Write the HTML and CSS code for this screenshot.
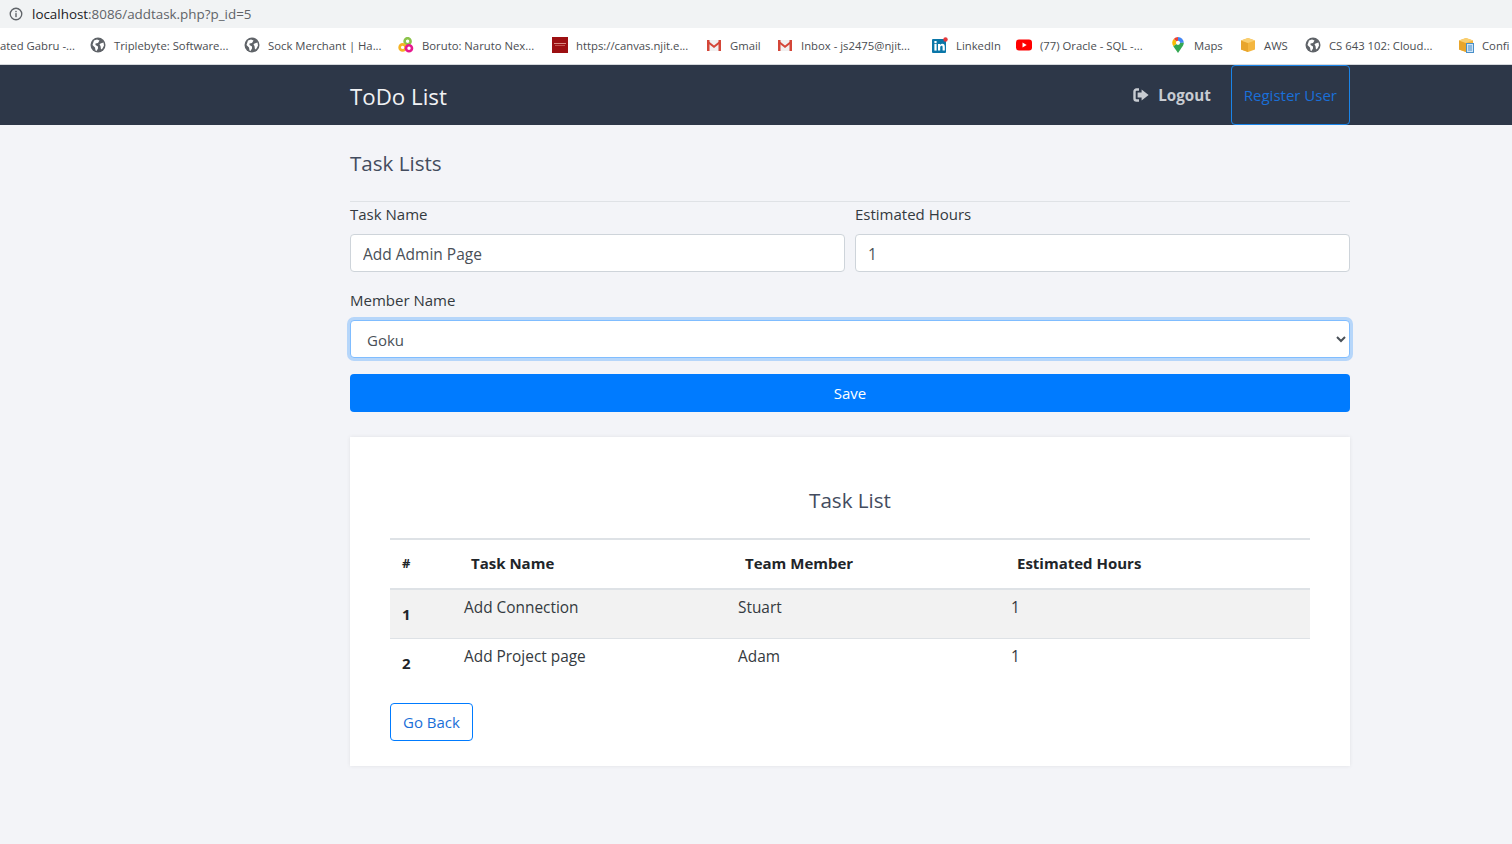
FILE: index.html

```html
<!DOCTYPE html>
<html lang="en">
<head>
    <meta charset="UTF-8">
    <title>ToDo List</title>
    <link rel="stylesheet" href="styles.css">
</head>
<body>
    <div class="address-bar">
        <svg class="info-icon" viewBox="0 0 16 16" width="14" height="14">
            <circle cx="8" cy="8" r="6.6" fill="none" stroke="#5f6368" stroke-width="1.5"/>
            <rect x="7.2" y="7" width="1.6" height="4.6" fill="#5f6368"/>
            <rect x="7.2" y="4.4" width="1.6" height="1.6" fill="#5f6368"/>
        </svg>
        <span class="url"><span class="url-host">localhost</span>:8086/addtask.php?p_id=5</span>
    </div>

    <div class="bookmarks">
        <div class="bookmark bookmark-cut"><span>ated Gabru -...</span></div>
        <div class="bookmark">
            <svg class="fav" viewBox="0 0 16 16"><use href="#globe"/></svg>
            <span>Triplebyte: Software...</span>
        </div>
        <div class="bookmark">
            <svg class="fav" viewBox="0 0 16 16"><use href="#globe"/></svg>
            <span>Sock Merchant | Ha...</span>
        </div>
        <div class="bookmark">
            <svg class="fav" viewBox="0 0 16 16">
                <circle cx="9.6" cy="4.2" r="3" fill="none" stroke="#8bc34a" stroke-width="2.6"/>
                <circle cx="4.6" cy="10.4" r="3" fill="none" stroke="#f5b324" stroke-width="2.6"/>
                <circle cx="11" cy="11.2" r="3" fill="none" stroke="#e6188f" stroke-width="2.6"/>
            </svg>
            <span>Boruto: Naruto Nex...</span>
        </div>
        <div class="bookmark">
            <svg class="fav" viewBox="0 0 16 16">
                <rect width="16" height="16" fill="#9c0f12"/>
                <rect x="2" y="6" width="12" height="1" fill="#d98a82"/>
                <rect x="3" y="8" width="10" height="1" fill="#c2534e"/>
            </svg>
            <span>https://canvas.njit.e...</span>
        </div>
        <div class="bookmark">
            <svg class="fav" viewBox="0 0 16 16"><use href="#gmail"/></svg>
            <span>Gmail</span>
        </div>
        <div class="bookmark">
            <svg class="fav" viewBox="0 0 16 16"><use href="#gmail"/></svg>
            <span>Inbox - js2475@njit...</span>
        </div>
        <div class="bookmark">
            <svg class="fav" viewBox="0 0 16 16">
                <rect y="2" width="14" height="14" rx="1" fill="#0a76a8"/>
                <rect x="2.4" y="7" width="2.2" height="6.6" fill="#fff"/>
                <rect x="2.4" y="4" width="2.2" height="2.2" fill="#fff"/>
                <path d="M6 7h2.1v1c.5-.8 1.3-1.2 2.2-1.2 1.8 0 2.5 1.1 2.5 2.9v3.9h-2.2v-3.5c0-.9-.3-1.4-1-1.4-.8 0-1.4.6-1.4 1.5v3.4H6z" fill="#fff"/>
                <circle cx="13.5" cy="2.5" r="2.2" fill="#e5383b"/>
            </svg>
            <span>LinkedIn</span>
        </div>
        <div class="bookmark">
            <svg class="fav" viewBox="0 0 16 16">
                <rect y="2.5" width="16" height="11" rx="3" fill="#f00"/>
                <path d="M6.5 5.5v5l4.2-2.5z" fill="#fff"/>
            </svg>
            <span>(77) Oracle - SQL -...</span>
        </div>
        <div class="bookmark">
            <svg class="fav" viewBox="0 0 16 16">
                <path d="M8 0a5.8 5.8 0 0 1 5.8 5.8L8 6z" fill="#4285f4"/>
                <path d="M8 0a5.8 5.8 0 0 0-4.3 1.9L8 6z" fill="#ea4335"/>
                <path d="M3.7 1.900a5.800 5.800 0 0 0-1.500 3.900c0 1.300.5 2.400 1.100 3.400L8 6z" fill="#fbbc04"/>
                <path d="M13.800 5.800c0 1.300-.6 2.400-1.200 3.400L8 16 3.300 9.200 8 6z" fill="#34a853"/>
                <circle cx="8" cy="5.800" r="2.100" fill="#fff"/>
            </svg>
            <span>Maps</span>
        </div>
        <div class="bookmark">
            <svg class="fav" viewBox="0 0 16 16"><use href="#box"/></svg>
            <span>AWS</span>
        </div>
        <div class="bookmark">
            <svg class="fav" viewBox="0 0 16 16"><use href="#globe"/></svg>
            <span>CS 643 102: Cloud...</span>
        </div>
        <div class="bookmark">
            <svg class="fav" viewBox="0 0 16 16">
                <use href="#box"/>
                <rect x="8.5" y="6.5" width="7" height="9" fill="#cfe4f7" stroke="#4a90c9"/>
                <path d="M10 9h4M10 11h4M10 13h4" stroke="#4a90c9"/>
            </svg>
            <span>Confi</span>
        </div>
    </div>

    <svg class="defs" width="0" height="0">
        <symbol id="globe" viewBox="0 0 16 16">
            <circle cx="8" cy="8" r="7.5" fill="#5f6368"/>
            <path d="M4 3.500l3-1 2.500 1-1.500 2.500-2.500.5 0 1.500 2.500 1.500 0 2-1.500 2.500-1-.5-.5-3-2.500-2.500zM10.500 6.500l3-1 .5 3-1.500 3-1.500 1-.5-3.500-1-1.500z" fill="#fff"/>
        </symbol>
        <symbol id="gmail" viewBox="0 0 16 16">
            <path d="M1 3h14v11H1z" fill="#f1f1f1"/>
            <path d="M1 3h2.500v11H1zM12.500 3H15v11h-2.500z" fill="#d44638"/>
            <path d="M1 3l7 5.500L15 3v2.600L8 11 1 5.600z" fill="#d44638"/>
        </symbol>
        <symbol id="box" viewBox="0 0 16 16">
            <path d="M8 1l7 2.500v9L8 15l-7-2.500v-9z" fill="#f4b63f"/>
            <path d="M8 6v9l-7-2.500v-9z" fill="#e8a52c"/>
            <path d="M1 3.500L8 1l7 2.500L8 6z" fill="#f9cf71"/>
        </symbol>
    </svg>

    <nav class="navbar">
        <div class="navbar-inner">
            <a class="brand" href="#">ToDo List</a>
            <div class="nav-links">
                <a class="logout" href="#">
                    <svg viewBox="0 0 16 14" width="16" height="14">
                        <path d="M6 1.500H3.500a2 2 0 0 0-2 2v7a2 2 0 0 0 2 2H6" fill="none" stroke="#c8ccd2" stroke-width="2.4"/>
                        <path d="M8.600 1.400L15.600 7l-7 5.600V9.400H4.600V4.600h4z" fill="#c8ccd2"/>
                    </svg>
                    Logout
                </a>
                <a class="register" href="#">Register User</a>
            </div>
        </div>
    </nav>

    <main class="container">
        <h2 class="page-title">Task Lists</h2>
        <hr class="divider">

        <form class="task-form">
            <div class="form-row">
                <div class="field">
                    <label for="task">Task Name</label>
                    <input id="task" class="control" type="text" value="Add Admin Page">
                </div>
                <div class="field">
                    <label for="hours">Estimated Hours</label>
                    <input id="hours" class="control" type="text" value="1">
                </div>
            </div>
            <div class="field">
                <label for="member">Member Name</label>
                <select id="member" class="control control-focus">
                    <option>Goku</option>
                </select>
            </div>
            <button class="save" type="button">Save</button>
        </form>

        <section class="card">
            <h3 class="card-title">Task List</h3>
            <table class="table">
                <thead>
                    <tr>
                        <th class="col-num">#</th>
                        <th class="col-task">Task Name</th>
                        <th class="col-member">Team Member</th>
                        <th class="col-hours">Estimated Hours</th>
                    </tr>
                </thead>
                <tbody>
                    <tr class="striped">
                        <th>1</th>
                        <td>Add Connection</td>
                        <td>Stuart</td>
                        <td>1</td>
                    </tr>
                    <tr>
                        <th>2</th>
                        <td>Add Project page</td>
                        <td>Adam</td>
                        <td>1</td>
                    </tr>
                </tbody>
            </table>
            <a class="back" href="#">Go Back</a>
        </section>
    </main>
</body>
</html>
```

FILE: styles.css

```css
* {
    box-sizing: border-box;
}
body {
    margin: 0;
    height: 844px;
    overflow: hidden;
    font-family: "Open Sans", "Noto Sans", sans-serif;
    font-size: 15px;
    color: #212529;
    background: #f3f4f8;
}
a {
    text-decoration: none;
}
.defs {
    display: none;
}

/* browser bars */
.address-bar {
    height: 28px;
    display: flex;
    align-items: center;
    padding-left: 9px;
    gap: 9px;
    background: #f1f3f4;
    font-size: 13.4px;
    color: #5f6368;
}
.url-host {
    color: #202124;
}
.bookmarks {
    height: 37px;
    padding-bottom: 2px;
    display: grid;
    grid-template-columns: 90px 154px 154px 154px 154px 71px 155px 84px 154px 70px 65px 153px 54px;
    align-items: center;
    background: #fff;
    border-bottom: 1px solid #d5d8dc;
    font-size: 11.3px;
    color: #4a4d51;
    overflow: hidden;
}
.bookmark {
    display: flex;
    align-items: center;
    gap: 8px;
    white-space: nowrap;
    overflow: hidden;
}
.fav {
    width: 16px;
    height: 16px;
    flex: none;
}

/* navbar */
.navbar {
    height: 60px;
    background: #2d3748;
}
.navbar-inner {
    width: 1000px;
    height: 100%;
    margin-left: 350px;
    display: flex;
    justify-content: space-between;
    align-items: center;
}
.brand {
    padding-top: 2px;
    font-size: 22.3px;
    color: #f1f2f4;
}
.nav-links {
    display: flex;
    align-items: stretch;
    height: 100%;
    gap: 20px;
}
.logout {
    display: flex;
    align-items: center;
    gap: 9px;
    font-size: 15.2px;
    font-weight: 700;
    color: #c8ccd2;
}
.register {
    display: flex;
    align-items: center;
    padding: 0 12px;
    border: 1px solid #1a84e8;
    border-radius: 4px;
    color: #1a6fd8;
}

/* form */
.container {
    width: 1000px;
    margin-left: 350px;
}
.page-title {
    margin: 0;
    padding-top: 23px;
    font-size: 20.6px;
    font-weight: 500;
    line-height: 30px;
    color: #434c5e;
}
.divider {
    margin: 23px 0 0;
    border: 0;
    border-top: 1px solid #dfe2e6;
}
.form-row {
    display: flex;
    gap: 10px;
}
.form-row .field {
    flex: 1;
}
.field label {
    display: block;
    height: 32px;
    line-height: 24px;
    color: #343a40;
}
.field {
    margin-bottom: 16px;
}
.control {
    display: block;
    width: 100%;
    height: 38px;
    padding: 7px 12px 5px;
    font: inherit;
    font-size: 15.5px;
    color: #495057;
    background: #fff;
    border: 1px solid #ced4da;
    border-radius: 4px;
    outline: none;
}
.control-focus {
    font-size: 15px;
    border-color: #80bdff;
    box-shadow: 0 0 0 3px rgba(0, 123, 255, 0.25);
}
.save {
    display: block;
    width: 100%;
    height: 38px;
    font: inherit;
    color: #fff;
    background: #007bff;
    border: 0;
    border-radius: 4px;
}

/* card with table */
.card {
    height: 329px;
    margin-top: 25px;
    padding: 40px;
    background: #fff;
    box-shadow: 0 0 4px rgba(0, 0, 0, 0.08);
}
.card-title {
    margin: 7px 0 22px;
    font-size: 20.6px;
    font-weight: 500;
    line-height: 32px;
    text-align: center;
    color: #434c5e;
}
.table {
    width: 100%;
    border-collapse: collapse;
    table-layout: fixed;
    border-top: 2px solid #dee2e6;
}
.table th {
    text-align: left;
    padding: 13px 12px;
    font-weight: 700;
    color: #212529;
}
.table td {
    padding: 7px 12px;
    vertical-align: top;
    font-size: 15.4px;
    color: #343a40;
}
.table thead th {
    height: 50px;
    border-bottom: 2px solid #dee2e6;
    padding: 12px 12px 14px 19px;
}
.table thead .col-num {
    width: 62px;
    padding-left: 12px;
    font-size: 13px;
}
.table thead .col-hours {
    padding-left: 18px;
}
.col-task {
    width: 274px;
}
.col-member {
    width: 273px;
}
.table tbody tr {
    height: 49px;
}
.striped {
    background: #f2f2f2;
    border-bottom: 1px solid #dee2e6;
}
.back {
    display: inline-block;
    margin-top: 16px;
    height: 38px;
    padding: 0 12px;
    line-height: 36px;
    color: #1a6fd8;
    background: #fff;
    border: 1px solid #007bff;
    border-radius: 4px;
}
```
